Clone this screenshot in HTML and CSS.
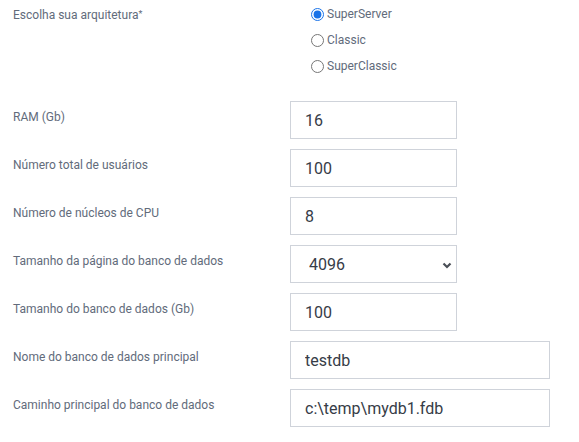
FILE: index.html
```html
<!DOCTYPE html>
<html lang="pt">
<head>
<meta charset="utf-8">
<link rel="stylesheet" href="styles.css">
</head>
<body>
<form class="form">
  <div class="row row-radio">
    <label class="lbl">Escolha sua arquitetura<span class="req">*</span></label>
    <div class="radios">
      <label class="radio"><input type="radio" name="arch" checked><span>SuperServer</span></label>
      <label class="radio"><input type="radio" name="arch"><span>Classic</span></label>
      <label class="radio"><input type="radio" name="arch"><span>SuperClassic</span></label>
    </div>
  </div>
  <div class="row">
    <label class="lbl">RAM (Gb)</label>
    <input class="field" type="text" value="16">
  </div>
  <div class="row">
    <label class="lbl">Número total de usuários</label>
    <input class="field" type="text" value="100">
  </div>
  <div class="row">
    <label class="lbl">Número de núcleos de CPU</label>
    <input class="field" type="text" value="8">
  </div>
  <div class="row">
    <label class="lbl">Tamanho da página do banco de dados</label>
    <div class="select-wrap">
      <select class="field select">
        <option>4096</option>
        <option>8192</option>
        <option>16384</option>
      </select>
      <svg class="chev" width="10" height="7" viewBox="0 0 10 7"><path d="M1.5 1.5 L5 5 L8.5 1.5" fill="none" stroke="#4a4f57" stroke-width="2.2"/></svg>
    </div>
  </div>
  <div class="row">
    <label class="lbl">Tamanho do banco de dados (Gb)</label>
    <input class="field" type="text" value="100">
  </div>
  <div class="row">
    <label class="lbl">Nome do banco de dados principal</label>
    <input class="field wide" type="text" value="testdb">
  </div>
  <div class="row">
    <label class="lbl">Caminho principal do banco de dados</label>
    <input class="field wide" type="text" value="c:\temp\mydb1.fdb">
  </div>
</form>
</body>
</html>
```

FILE: styles.css
```css
* { box-sizing: border-box; }
html, body { margin: 0; background: #fff; }
body { font-family: Roboto, "Noto Sans", sans-serif; }
.form {
  display: flex;
  flex-direction: column;
  gap: 10px;
  padding: 6px 0 0 13px;
}
.row {
  display: grid;
  grid-template-columns: 277px 1fr;
  align-items: start;
}
.row-radio { margin-bottom: 17px; }
.lbl {
  font-size: 12px;
  line-height: 16px;
  color: #626b7b;
  padding-top: 8px;
}
.row-radio .lbl { padding-top: 0; }
.req { font-size: 9px; vertical-align: 2px; }
.radios {
  display: flex;
  flex-direction: column;
  gap: 10px;
  padding-left: 21px;
}
.radio {
  display: flex;
  align-items: center;
  gap: 3px;
  font-size: 12px;
  line-height: 16px;
  color: #626b7b;
}
.radio input {
  margin: 0;
  width: 13px;
  height: 13px;
  accent-color: #1a73e8;
}
.field {
  display: block;
  width: 167px;
  height: 38px;
  border: 1px solid #cfd3da;
  border-radius: 0;
  padding: 0 14px;
  font-family: Roboto, "Noto Sans", sans-serif;
  font-size: 16px;
  color: #363c47;
  background: #fff;
  outline: none;
}
.field.wide { width: 260px; }
.select-wrap { position: relative; width: 167px; }
.select {
  appearance: none;
  -webkit-appearance: none;
  padding-left: 18px;
}
.chev {
  position: absolute;
  right: 5px;
  top: 17px;
  pointer-events: none;
}
```
